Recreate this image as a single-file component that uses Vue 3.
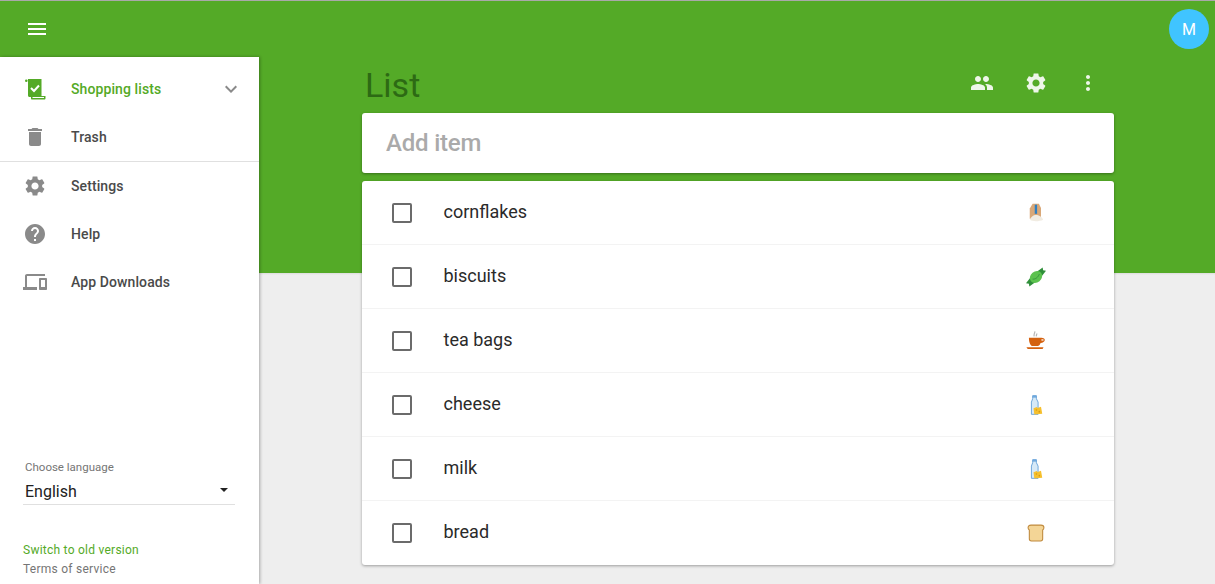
<template>
  <div class="page">
    <header class="toolbar">
      <button class="menu-btn">
        <svg viewBox="0 0 24 24" class="ic-menu"><path d="M3 18h18v-2H3v2zm0-5h18v-2H3v2zm0-7v2h18V6H3z" /></svg>
      </button>
      <div class="avatar">M</div>
    </header>

    <div class="body">
      <aside class="sidebar">
        <nav class="nav top">
          <div class="nav-item active">
            <svg viewBox="0 0 24 24" class="nav-ic">
              <path fill="#54aa27" d="M5 2h13.500v17H22.500v2.500c0 .5-.4 1-1 1H9c-.6 0-1-.4-1-1V20H6.500c-.8 0-1.500-.7-1.500-1.500z" />
              <circle cx="3.300" cy="3.800" r="1.300" fill="#54aa27" />
              <path fill="#fff" d="M9.500 20h11.500v1H9.500z" />
              <path fill="none" stroke="#fff" stroke-width="2" d="M8 11l3 3 5-5.500" />
            </svg>
            <span class="nav-label">Shopping lists</span>
            <svg viewBox="0 0 24 24" class="chevron"><path d="M16.59 8.59L12 13.17 7.41 8.59 6 10l6 6 6-6z" /></svg>
          </div>
          <div class="nav-item">
            <svg viewBox="0 0 24 24" class="nav-ic"><path d="M6 19c0 1.1.9 2 2 2h8c1.1 0 2-.9 2-2V7H6v12zM19 4h-3.5l-1-1h-5l-1 1H5v2h14V4z" /></svg>
            <span class="nav-label">Trash</span>
          </div>
        </nav>
        <nav class="nav">
          <div class="nav-item">
            <svg viewBox="0 0 24 24" class="nav-ic"><path :d="gearPath" /></svg>
            <span class="nav-label">Settings</span>
          </div>
          <div class="nav-item">
            <svg viewBox="0 0 24 24" class="nav-ic"><path d="M12 2C6.48 2 2 6.48 2 12s4.48 10 10 10 10-4.48 10-10S17.52 2 12 2zm1 17h-2v-2h2v2zm2.07-7.75l-.9.92C13.45 12.9 13 13.5 13 15h-2v-.5c0-1.1.45-2.1 1.17-2.83l1.24-1.26c.37-.36.59-.86.59-1.41 0-1.1-.9-2-2-2s-2 .9-2 2H8c0-2.21 1.79-4 4-4s4 1.79 4 4c0 .88-.36 1.68-.93 2.25z" /></svg>
            <span class="nav-label">Help</span>
          </div>
          <div class="nav-item">
            <svg viewBox="0 0 24 24" class="nav-ic"><path d="M4 6h18V4H4c-1.1 0-2 .9-2 2v11H0v3h14v-3H4V6zm19 2h-6c-.55 0-1 .45-1 1v10c0 .55.45 1 1 1h6c.55 0 1-.45 1-1V9c0-.55-.45-1-1-1zm-1 9h-4v-7h4v7z" /></svg>
            <span class="nav-label">App Downloads</span>
          </div>
        </nav>

        <div class="side-foot">
          <div class="lang-label">Choose language</div>
          <div class="lang-select">
            <span>English</span>
            <i class="caret"></i>
          </div>
          <a class="old-link">Switch to old version</a>
          <a class="terms">Terms of service</a>
        </div>
      </aside>

      <main class="main">
        <div class="column">
          <div class="title-row">
            <h1 class="title">List</h1>
            <div class="actions">
              <svg viewBox="0 0 24 24" class="act-ic people"><path d="M16 11c1.66 0 2.99-1.34 2.99-3S17.66 5 16 5c-1.66 0-3 1.34-3 3s1.34 3 3 3zm-8 0c1.66 0 2.99-1.34 2.99-3S9.66 5 8 5C6.34 5 5 6.34 5 8s1.34 3 3 3zm0 2c-2.33 0-7 1.17-7 3.5V19h14v-2.5c0-2.33-4.67-3.5-7-3.5zm8 0c-.29 0-.62.02-.97.05 1.16.84 1.97 1.97 1.97 3.45V19h6v-2.5c0-2.33-4.67-3.5-7-3.5z" /></svg>
              <svg viewBox="0 0 24 24" class="act-ic"><path :d="gearPath" /></svg>
              <svg viewBox="0 0 24 24" class="act-ic"><path d="M12 8c1.1 0 2-.9 2-2s-.9-2-2-2-2 .9-2 2 .9 2 2 2zm0 2c-1.1 0-2 .9-2 2s.9 2 2 2 2-.9 2-2-.9-2-2-2zm0 6c-1.1 0-2 .9-2 2s.9 2 2 2 2-.9 2-2-.9-2-2-2z" /></svg>
            </div>
          </div>

          <div class="add-card">Add item</div>

          <ul class="list-card">
            <li v-for="item in items" :key="item.name" class="row">
              <span class="check"></span>
              <span class="row-name">{{ item.name }}</span>
              <svg viewBox="0 0 24 24" class="food">
                <template v-if="item.icon === 'flakes'">
                  <path fill="#d9a878" d="M4.500 6.500L8 1h7.500l2.500 5v13H4.500z" />
                  <path fill="#2e7fc1" d="M10.500 2h2.800v11h-2.800z" />
                  <path fill="#f1ece2" d="M5 20.500c0-3.500 4-6 7-6s7.500 2.500 8.500 5.500c-3.500 2-12 2.500-15.500.5z" />
                </template>
                <template v-else-if="item.icon === 'candy'">
                  <path fill="#2f8f3a" d="M7 10.500L0 19.500l3.500.5.500 3.500 9.500-7zM17 13.500l7-9-3.500-.5-.5-3.500-9.500 7z" />
                  <ellipse cx="12" cy="12" rx="8" ry="6.500" transform="rotate(-40 12 12)" fill="#5cc24f" />
                  <path fill="none" stroke="#2f8f3a" d="M8 14.500c3 .5 6.500-2 8-6" />
                </template>
                <template v-else-if="item.icon === 'tea'">
                  <path fill="none" stroke="#b8b8b8" stroke-width="1.500" d="M10 6.500C8.500 4.500 11 3 10.500 .5M12.500 6.500c-.5-1.500 .5-2 .5-3.500" />
                  <path fill="#d4610f" d="M3.500 8h15c2.500 0 4.500 1 4 3-.4 1.800-2 2.900-5 3.300-.8 2.200-2 3.700-3.500 3.700H8c-2.500 0-4.500-4-4.500-10z" />
                  <path fill="#fff" d="M18.500 10h2.500v1.500h-2.500z" />
                  <path fill="#d4610f" d="M.5 19.500h20.500l-1 2H2z" />
                </template>
                <template v-else-if="item.icon === 'milk'">
                  <path fill="#d6e9f7" stroke="#6fa8dc" stroke-width="1.200" d="M8 .8h4.500v3.700l2 4v14.700H6.500V8.500l1.500-4z" />
                  <path fill="#6fa8dc" d="M8 .8h4.500v2.400H8z" />
                  <path fill="#f6c02e" d="M9 16l4-1.500 1 1 4-1.500 1.500 8.500-9.500 1z" />
                  <circle cx="12.500" cy="18" r="1" fill="#d99a13" />
                  <circle cx="16" cy="20" r="1" fill="#d99a13" />
                </template>
                <template v-else>
                  <path fill="#f4d596" stroke="#c08a3e" stroke-width="1.300" d="M6 2.500h12c2.500 0 3.500 1.500 3.500 3.200 0 1.300-.7 2.300-1.500 2.800v10.500c0 1.500-1 2.500-2.500 2.500h-11c-1.500 0-2.500-1-2.500-2.500V8.500c-.8-.5-1.500-1.500-1.500-2.800C2.500 4 3.500 2.500 6 2.500z" />
                </template>
              </svg>
            </li>
          </ul>
        </div>
      </main>
    </div>
  </div>
</template>

<script setup>
const gearPath = 'M19.14 12.94c.04-.3.06-.61.06-.94 0-.32-.02-.64-.07-.94l2.03-1.58c.18-.14.23-.41.12-.61l-1.92-3.32c-.12-.22-.37-.29-.59-.22l-2.39.96c-.5-.38-1.03-.7-1.62-.94l-.36-2.54c-.04-.24-.24-.41-.48-.41h-3.84c-.24 0-.43.17-.47.41l-.36 2.54c-.59.24-1.13.57-1.62.94l-2.39-.96c-.22-.08-.47 0-.59.22L2.74 8.87c-.12.21-.08.47.12.61l2.03 1.58c-.05.3-.09.63-.09.94s.02.64.07.94l-2.03 1.58c-.18.14-.23.41-.12.61l1.92 3.32c.12.22.37.29.59.22l2.39-.96c.5.38 1.03.7 1.62.94l.36 2.54c.05.24.24.41.48.41h3.84c.24 0 .44-.17.47-.41l.36-2.54c.59-.24 1.13-.56 1.62-.94l2.39.96c.22.08.47 0 .59-.22l1.92-3.32c.12-.22.07-.47-.12-.61l-2.01-1.58zM12 15.6c-1.98 0-3.6-1.62-3.6-3.6s1.62-3.6 3.6-3.6 3.6 1.62 3.6 3.6-1.62 3.6-3.6 3.6z';

const items = [
  { name: 'cornflakes', icon: 'flakes' },
  { name: 'biscuits', icon: 'candy' },
  { name: 'tea bags', icon: 'tea' },
  { name: 'cheese', icon: 'milk' },
  { name: 'milk', icon: 'milk' },
  { name: 'bread', icon: 'bread' }
];
</script>

<style>
html, body { margin: 0; height: 100%; overflow: hidden; }
</style>

<style scoped>
.page {
  width: 1215px; height: 584px; display: flex; flex-direction: column;
  font-family: Roboto, "Liberation Sans", sans-serif; overflow: hidden;
  background: #eee;
}
.toolbar {
  height: 56px; flex: none; background: #54aa27; border-top: 1px solid #a9a9a9;
  display: flex; justify-content: space-between; align-items: flex-start;
  box-sizing: content-box;
}
.menu-btn {
  background: none; border: none; padding: 0; margin: 16px 0 0 25px;
  width: 24px; height: 24px; display: block;
}
.ic-menu { width: 24px; height: 24px; fill: #fff; display: block; }
.avatar {
  width: 40px; height: 40px; border-radius: 50%; background: #40c4ff; color: #fff;
  display: flex; align-items: center; justify-content: center;
  font-size: 16px; margin: 8px 6px 0 0;
}
.body { flex: 1; display: flex; min-height: 0; }
.sidebar {
  width: 259px; flex: none; background: #fff; display: flex; flex-direction: column;
  box-shadow: 1px 0 3px rgba(0,0,0,0.3); position: relative; z-index: 1;
}
.nav.top { padding-top: 8px; border-bottom: 1px solid #e0e0e0; }
.nav-item { height: 48px; display: flex; align-items: center; padding-left: 23px; }
.nav-ic { width: 24px; height: 24px; fill: #8a8a8a; flex: none; }
.nav-label { margin-left: 24px; font-size: 14px; font-weight: 500; color: #4a4a4a; letter-spacing: 0.1px; line-height: 20px; margin-top: -1px; }
.nav-item.active .nav-label { color: #54aa27; }
.chevron { width: 24px; height: 24px; fill: #8a8a8a; margin-left: auto; margin-right: 16px; }
.side-foot { margin-top: auto; padding: 0 24px 8px 23px; display: flex; flex-direction: column; }
.lang-label { font-size: 11.5px; color: #757575; padding-left: 2px; line-height: 14px; margin-top: -1px; }
.lang-select {
  margin-top: 4px; height: 27px; border-bottom: 1px solid #e0e0e0;
  display: flex; align-items: center; justify-content: space-between;
  font-size: 16px; color: #212121; padding: 0 7px 0 2px; box-sizing: border-box;
}
.caret {
  width: 0; height: 0; border-left: 4.5px solid transparent; border-right: 4.5px solid transparent;
  border-top: 4.5px solid #222; margin-top: -2px;
}
.old-link { margin-top: 38px; font-size: 12px; line-height: 14px; color: #54aa27; letter-spacing: 0.25px; }
.terms { margin-top: 5px; font-size: 12px; line-height: 14px; color: #757575; letter-spacing: 0.25px; }
.main {
  flex: 1; min-width: 0; padding-left: 103px;
  background: linear-gradient(#54aa27 216px, #dcdcdc 216px, #eee 218px);
}
.column { width: 752px; }
.title-row { height: 56px; display: flex; justify-content: space-between; align-items: center; }
.title { margin: 0 0 0 3px; font-size: 34px; font-weight: 400; color: #2d6a14; line-height: 56px; }
.actions { display: flex; gap: 28px; padding-right: 14px; margin-top: -4px; }
.act-ic { width: 24px; height: 24px; fill: #eef6e9; display: block; }
.act-ic.people { margin-right: 2px; }
.add-card {
  height: 60px; background: #fff; border-radius: 3px; box-shadow: 0 1px 3px rgba(0,0,0,0.35);
  display: flex; align-items: center; padding-left: 24px; font-size: 24px; font-weight: 500;
  letter-spacing: -0.2px; color: #aaa;
}
.list-card {
  list-style: none; margin: 8px 0 0; padding: 0; background: #fff; border-radius: 3px;
  box-shadow: 0 1px 3px rgba(0,0,0,0.35);
}
.row { height: 64px; display: flex; align-items: center; border-bottom: 1px solid #f3f3f3; box-sizing: border-box; padding-left: 30px; }
.row:last-child { border-bottom: none; }
.check { width: 20px; height: 20px; box-sizing: border-box; border: 2px solid #6b6b6b; border-radius: 2px; flex: none; }
.row-name { margin-left: 31.5px; font-size: 18px; line-height: 24px; margin-top: -2px; color: #2a2a2a; }
.food { width: 20px; height: 20px; margin-left: auto; margin-right: 68px; flex: none; }
</style>
